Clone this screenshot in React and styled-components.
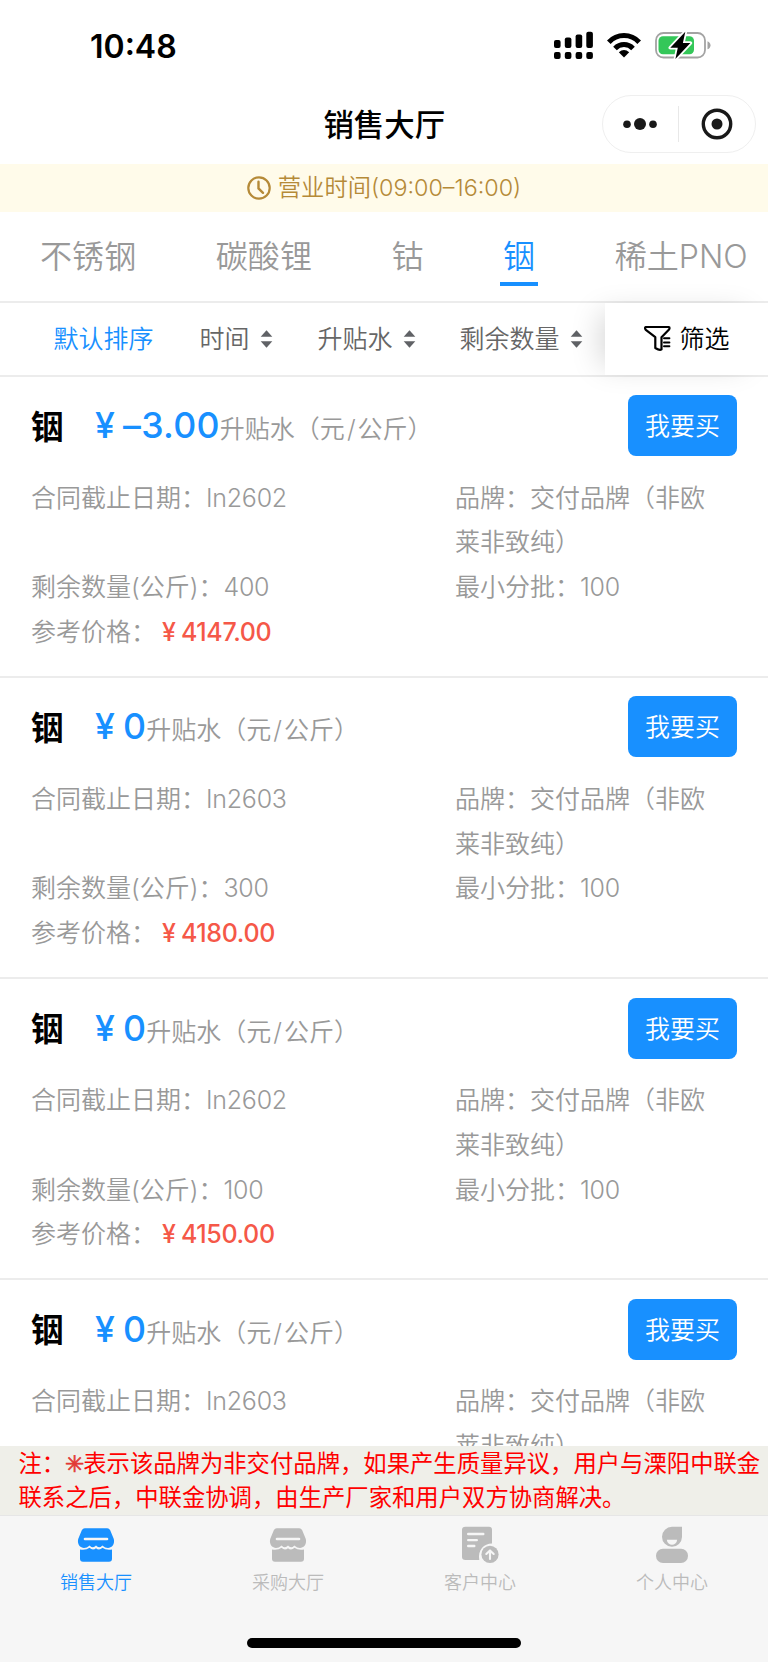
import React from 'react';
import styled, { createGlobalStyle } from 'styled-components';

const GlobalStyle = createGlobalStyle`
  * {
    box-sizing: border-box;
  }

  body {
    margin: 0;
    background: #fff;
    font-family: 'Inter', 'Noto Sans CJK SC', sans-serif;
    font-weight: 350;
  }
`;

const Page = styled.div`
  width: 768px;
  height: 1662px;
  display: flex;
  flex-direction: column;
  overflow: hidden;
  background: #fff;
`;

/* Status bar */
const StatusBar = styled.div`
  flex: none;
  height: 92px;
  padding: 0 57.5px 0 90px;
  display: flex;
  justify-content: space-between;
`;

const Clock = styled.div`
  font-size: 32px;
  font-weight: 600;
  line-height: 94px;
`;

const StatusIcons = styled.div`
  display: flex;
  gap: 14px;
  padding-top: 31px;
`;

/* Title bar */
const TitleBar = styled.header`
  flex: none;
  height: 71.5px;
  padding: 2.5px 12.5px 0 0;
  display: grid;
  grid-template-columns: 167px 1fr 154px;
`;

const Title = styled.h1`
  grid-column: 2;
  margin: 0;
  font-size: 30.4px;
  font-weight: 500;
  line-height: 61px;
  text-align: center;
`;

const Capsule = styled.div`
  height: 58px;
  border: 1px solid #efefef;
  border-radius: 29px;
  display: flex;
  align-items: center;
`;

const CapsuleButton = styled.div`
  flex: 1;
  display: flex;
  justify-content: center;
`;

const CapsuleLine = styled.div`
  width: 1px;
  height: 36px;
  background: #e8e8e8;
`;

const Notice = styled.div`
  flex: none;
  height: 48px;
  display: flex;
  align-items: center;
  justify-content: center;
  gap: 7px;
  background: #fffbea;
  color: #b58a38;
  font-size: 23.3px;

  span {
    padding-bottom: 3px;
  }
`;

/* Category tabs */
const Tabs = styled.nav`
  flex: none;
  height: 91.5px;
  padding-left: 40px;
  display: flex;
  gap: 79.5px;
  border-bottom: 2px solid #ececec;
  white-space: nowrap;
`;

const Tab = styled.div`
  color: ${({ $active }) => ($active ? '#1890ff' : '#999')};
  font-size: 32.1px;
  line-height: 70px;
  padding-top: 10px;
  display: flex;
  flex-direction: column;
  align-items: center;

  &::after {
    content: '';
    width: 38px;
    height: 4px;
    margin: -10px -3px 0;
    background: ${({ $active }) => ($active ? '#1890ff' : 'transparent')};
  }
`;

/* Sort bar */
const SortBar = styled.div`
  flex: none;
  height: 73.5px;
  padding-left: 53.5px;
  display: flex;
  border-bottom: 2px solid #ececec;
`;

const SortItem = styled.div`
  width: ${({ $width }) => $width}px;
  flex: none;
  display: flex;
  align-items: center;
  gap: 10px;
  color: ${({ $active }) => ($active ? '#1890ff' : '#666')};
  font-size: 25px;
  white-space: nowrap;

  span {
    padding-bottom: 3px;
  }
`;

const Filter = styled.div`
  flex: 1;
  display: flex;
  align-items: center;
  gap: 9px;
  padding-left: 39px;
  background: #fff;
  box-shadow: -14px 0 30px -10px rgba(0, 0, 0, 0.17);
  color: #000;
  font-size: 25px;

  span {
    padding-bottom: 3px;
  }
`;

/* Contract list */
const List = styled.main`
  height: 1069.5px;
  flex: none;
  overflow: hidden;
`;

const Card = styled.section`
  height: 301.3px;
  padding: 18.5px 31px 0;

  /* the divider overlaps the bottom of the card above */
  & + & {
    height: 303.3px;
    margin-top: -2px;
    border-top: 2px solid #ececec;
  }
`;

const CardHead = styled.div`
  height: 61px;
  display: flex;
  align-items: center;
`;

const Metal = styled.div`
  width: 64px;
  padding-bottom: 3px;
  font-size: 32.8px;
  font-weight: 700;
`;

const Premium = styled.div`
  flex: 1;
  display: flex;
  align-items: baseline;
  padding-bottom: 1px;
  color: #999;
  font-size: 25px;
`;

const PremiumValue = styled.span`
  color: #1890ff;
  font-size: 35.7px;
  font-weight: 500;
  letter-spacing: 0.3px;
  word-spacing: -2px;
`;

const Slash = styled.span`
  padding: 0 2px;
`;

const BuyButton = styled.button`
  width: 109px;
  height: 61px;
  padding: 0 0 3px;
  border: 0;
  border-radius: 8px;
  background: #1890ff;
  color: #fff;
  font: inherit;
  font-size: 25px;
`;

const Details = styled.div`
  margin-top: 19.5px;
  display: grid;
  grid-template-columns: 424px 262px;
  color: #999;
  font-size: 25px;
  line-height: 44.8px;
`;

const Value = styled.span`
  letter-spacing: -0.25px;
`;

const Price = styled.span`
  margin-left: 6px;
  color: #f55848;
  font-weight: 500;
  letter-spacing: -0.35px;
  word-spacing: -1px;
`;

/* Footer */
const Remark = styled.div`
  flex: none;
  height: 68.5px;
  padding: 1px 0 0 18.5px;
  background: #efefe9;
  color: #f00;
  font-size: 23.35px;
  font-weight: 400;
  line-height: 34.2px;
  white-space: nowrap;
`;

const Star = styled.span`
  display: inline-block;
  width: 18px;
  color: #e23a36;
  -webkit-text-stroke: 0.7px #e23a36;
`;

const BottomBar = styled.footer`
  flex: 1;
  border-top: 1px solid #e6e6e6;
  background: #f6f6f6;
  display: flex;
  flex-direction: column;
  align-items: center;
`;

const BottomTabs = styled.div`
  width: 100%;
  height: 122.5px;
  display: grid;
  grid-template-columns: repeat(4, 1fr);
`;

const BottomTab = styled.div`
  display: flex;
  flex-direction: column;
  align-items: center;
  padding-top: 9.5px;
  color: ${({ $active }) => ($active ? '#1890ff' : '#bbb')};
  font-size: 18px;
  line-height: 26px;

  svg {
    margin-bottom: 7px;
  }
`;

const HomeIndicator = styled.div`
  width: 274px;
  height: 9.5px;
  border-radius: 5px;
  background: #000;
`;

const SignalIcon = () => (
  <svg width="39" height="29" viewBox="0 0 39 29">
    <rect x="0" y="9" width="6.6" height="8" rx="2" />
    <rect x="10.8" y="6.5" width="6.6" height="10.5" rx="2" />
    <rect x="21.6" y="3.5" width="6.6" height="13.5" rx="2" />
    <rect x="32.3" y="0.7" width="6.6" height="16.3" rx="2" />
    {[0, 10.8, 21.6, 32.3].map((x) => (
      <rect key={x} x={x} y="21" width="6.6" height="7" rx="2" />
    ))}
  </svg>
);

const WifiIcon = () => (
  <svg width="34" height="29" viewBox="0 0 34 29">
    <g fill="none" stroke="#000" strokeWidth="5">
      <path d="M1.8 11.2C10 2.2 24 2.2 32.2 11.2" />
      <path d="M8 17.4C13 12.2 21 12.2 26 17.4" />
    </g>
    <path d="M11.8 21.2Q17 16.8 22.2 21.2L17 26.5Z" />
  </svg>
);

const BatteryIcon = () => (
  <svg width="56" height="29" viewBox="0 0 56 29">
    <rect x="1" y="2" width="49" height="24.5" rx="7.5" fill="#fff" stroke="#a3a3a3" strokeWidth="1.8" />
    <path d="M52.5 10.2C56.5 11.5 56.5 17 52.5 18.3Z" fill="#a3a3a3" />
    <rect x="3.5" y="5.3" width="35.5" height="18" rx="4.5" fill="#34c759" />
    <path
      d="M30.3 .8L15.3 16.7H22.8L20.4 28L35.4 12H27.9Z"
      fill="#000"
      stroke="#fff"
      strokeWidth="3.6"
      strokeLinejoin="round"
      paintOrder="stroke"
    />
  </svg>
);

const DotsIcon = () => (
  <svg width="36" height="14" viewBox="0 0 36 14" fill="#191919">
    <circle cx="5" cy="7.3" r="3.8" />
    <circle cx="18" cy="7" r="6" />
    <circle cx="31" cy="7.3" r="3.8" />
  </svg>
);

const TargetIcon = () => (
  <svg width="32" height="32" viewBox="0 0 32 32">
    <circle cx="16" cy="16" r="13.7" fill="none" stroke="#191919" strokeWidth="3.4" />
    <circle cx="16" cy="16" r="5.5" fill="#191919" />
  </svg>
);

const ClockIcon = () => (
  <svg width="24" height="24" viewBox="0 0 24 24" fill="none" stroke="#b58a38">
    <circle cx="12" cy="12" r="10.7" strokeWidth="2.2" />
    <path d="M11.5 5.8V12.4L16 16.8" strokeWidth="2.4" strokeLinecap="round" />
  </svg>
);

const SortIcon = () => (
  <svg width="13" height="20" viewBox="0 0 13 20" fill="#606266">
    <path d="M6.5 1.2L12.3 7.7H.7Z" />
    <path d="M6.5 18.8L12.3 12.3H.7Z" />
  </svg>
);

const FilterIcon = () => (
  <svg width="27" height="27" viewBox="0 0 27 27" fill="none" stroke="#000" strokeLinejoin="round" strokeLinecap="round">
    <path d="M1.8 2H24.8C25.8 2 25.8 3.5 24.8 4.8L17.5 12.2V24.4C16 25.4 14.5 25 11.3 23V12.2L1.8 4.8C.8 3.4 .8 2.2 1.8 2Z" strokeWidth="2.2" />
    <path d="M20 13.2H25.4M20 17.4H25.4M20 21.2H25.4" strokeWidth="2" />
  </svg>
);

const StoreIcon = () => (
  <svg width="38" height="38" viewBox="0 0 38 38" fill="currentColor">
    <path d="M7.8 3.3H30.2Q32.2 3.3 33.2 5.2L36.6 13.6C38.2 18 35.6 22.9 31 22.9Q28.3 22.9 25.3 20.4Q22.2 24 19 20.6Q15.8 24 12.7 20.4Q9.7 22.9 7 22.9C2.4 22.9 -.2 18 1.4 13.6L4.8 5.2Q5.8 3.3 7.8 3.3Z" />
    <path d="M3 24.5Q9 25.5 12.5 22.8Q15.8 26 19 23.2Q22.2 26 25.5 22.8Q29 25.5 35 24.5V33.7Q35 36.7 32 36.7H6Q3 36.7 3 33.7Z" />
    <path d="M8 14H30" stroke="#f6f6f6" strokeWidth="2.6" strokeLinecap="round" />
  </svg>
);

const RecordIcon = () => (
  <svg width="38" height="38" viewBox="0 0 38 38" fill="currentColor">
    <path d="M4.5 1.8H28Q31 1.8 31 4.8V18.4C23 18.4 16.5 25 18.3 35H4.5Q1 35 1 32V4.8Q1 1.8 4.5 1.8Z" />
    <path d="M7.2 9H22.3M7.2 15.1H15.8M7.2 21H13.3" stroke="#f6f6f6" strokeWidth="2.4" strokeLinecap="round" />
    <circle cx="29" cy="29.4" r="8.6" />
    <path d="M29 34V26M25.3 29L29 25.4L32.7 29" fill="none" stroke="#f6f6f6" strokeWidth="2.1" strokeLinecap="round" strokeLinejoin="round" />
  </svg>
);

const UserIcon = () => (
  <svg width="38" height="38" viewBox="0 0 38 38" fill="currentColor">
    <path d="M19 1.8H29V12A10 10 0 1 1 19 1.8Z" />
    <rect x="3" y="23.7" width="32" height="14.3" rx="7" />
    <path d="M13.8 14.7H24.2C23.4 21.4 14.6 21.4 13.8 14.7Z" fill="#f6f6f6" />
  </svg>
);

const contracts = [
  { premium: '–3.00', code: 'In2602', amount: 400, price: '4147.00' },
  { premium: '0', code: 'In2603', amount: 300, price: '4180.00' },
  { premium: '0', code: 'In2602', amount: 100, price: '4150.00' },
  { premium: '0', code: 'In2603' },
];

function ContractCard({ premium, code, amount, price }) {
  return (
    <Card>
      <CardHead>
        <Metal>铟</Metal>
        <Premium>
          <PremiumValue>¥ {premium}</PremiumValue>
          <span>升贴水（元<Slash>/</Slash>公斤）</span>
        </Premium>
        <BuyButton>我要买</BuyButton>
      </CardHead>
      <Details>
        <div>合同截止日期：<Value>{code}</Value></div>
        <div>品牌：交付品牌（非欧莱非致纯）</div>
        {amount && (
          <>
            <div>剩余数量(公斤)：<Value>{amount}</Value></div>
            <div>最小分批：<Value>100</Value></div>
          </>
        )}
        {price && (
          <div>
            参考价格：<Price>¥ {price}</Price>
          </div>
        )}
      </Details>
    </Card>
  );
}

function App() {
  return (
    <Page>
      <GlobalStyle />
      <StatusBar>
        <Clock>10:48</Clock>
        <StatusIcons>
          <SignalIcon />
          <WifiIcon />
          <BatteryIcon />
        </StatusIcons>
      </StatusBar>

      <TitleBar>
        <Title>销售大厅</Title>
        <Capsule>
          <CapsuleButton>
            <DotsIcon />
          </CapsuleButton>
          <CapsuleLine />
          <CapsuleButton>
            <TargetIcon />
          </CapsuleButton>
        </Capsule>
      </TitleBar>

      <Notice>
        <ClockIcon />
        <span>营业时间(09:00–16:00)</span>
      </Notice>

      <Tabs>
        <Tab>不锈钢</Tab>
        <Tab>碳酸锂</Tab>
        <Tab>钴</Tab>
        <Tab $active>铟</Tab>
        <Tab>稀土PNO</Tab>
      </Tabs>

      <SortBar>
        <SortItem $active $width={146}>
          <span>默认排序</span>
        </SortItem>
        <SortItem $width={118}>
          <span>时间</span>
          <SortIcon />
        </SortItem>
        <SortItem $width={142}>
          <span>升贴水</span>
          <SortIcon />
        </SortItem>
        <SortItem $width={145}>
          <span>剩余数量</span>
          <SortIcon />
        </SortItem>
        <Filter>
          <FilterIcon />
          <span>筛选</span>
        </Filter>
      </SortBar>

      <List>
        {contracts.map((item, index) => (
          <ContractCard key={index} {...item} />
        ))}
      </List>

      <Remark>
        注：<Star>✳</Star>表示该品牌为非交付品牌，如果产生质量异议，用户与溧阳中联金
        <br />
        联系之后，中联金协调，由生产厂家和用户双方协商解决。
      </Remark>

      <BottomBar>
        <BottomTabs>
          <BottomTab $active>
            <StoreIcon />
            销售大厅
          </BottomTab>
          <BottomTab>
            <StoreIcon />
            采购大厅
          </BottomTab>
          <BottomTab>
            <RecordIcon />
            客户中心
          </BottomTab>
          <BottomTab>
            <UserIcon />
            个人中心
          </BottomTab>
        </BottomTabs>
        <HomeIndicator />
      </BottomBar>
    </Page>
  );
}

export default App;
